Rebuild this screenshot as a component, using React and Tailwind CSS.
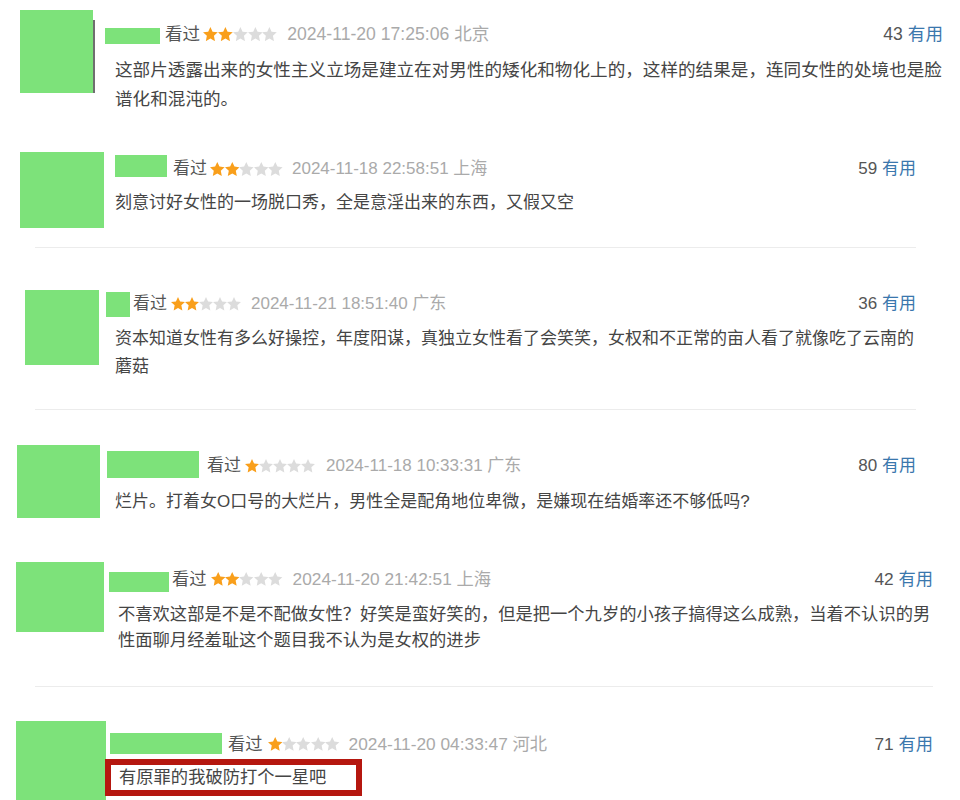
import React from "react";

const G = "bg-[#7de27a]";

function Stars({ n, wrap, size }) {
  return (
    <span className={"flex items-center h-[24px] shrink-0 " + wrap}>
      {[0, 1, 2, 3, 4].map((i) => (
        <svg key={i} viewBox="0.5 0.5 23 22" className={size}>
          <polygon
            points="12,0.5 15.4,7.7 23.5,8.7 17.5,14.2 19.1,22.5 12,18.4 4.9,22.5 6.5,14.2 0.5,8.7 8.6,7.7"
            fill={i < n ? "#f99f1b" : "#dcdcdc"}
          />
        </svg>
      ))}
    </span>
  );
}

function Useful({ num }) {
  return (
    <span className="ml-auto whitespace-nowrap">
      <span className="text-[#555]">{num}</span>{" "}
      <span className="text-[#3a77ad]">有用</span>
    </span>
  );
}

export default function App() {
  return (
    <div className="w-[960px] h-[800px] bg-white overflow-hidden flex flex-col font-['Liberation_Sans','Noto_Sans_CJK_SC',sans-serif] text-[#454545]">
      {/* Block 1 */}
      <div className="h-[140px] shrink-0 flex items-start text-[17.6px]">
        <div className={"ml-[20px] mt-[10px] w-[73px] h-[83px] shrink-0 " + G} />
        <div className="mt-[20px] w-[2px] h-[73px] bg-[#6f6f6f] shrink-0" />
        <div className="ml-[10px] pt-[22px] w-[838px] shrink-0">
          <div className="flex items-start h-[24px] leading-[24px] whitespace-nowrap">
            <div className={"mt-[6px] w-[55px] h-[16px] shrink-0 " + G} />
            <span className="ml-[5px] text-[#555]">看过</span>
            <Stars n={2} wrap="ml-[3px] w-[74px]" size="w-[14.8px] h-[14.2px]" />
            <span className="ml-[10px] text-[#aaa]">2024-11-20 17:25:06 北京</span>
            <Useful num="43" />
          </div>
          <p className="mt-[10px] ml-[10px] leading-[29px] whitespace-nowrap">
            这部片透露出来的女性主义立场是建立在对男性的矮化和物化上的，这样的结果是，连同女性的处境也是脸
            <br />
            谱化和混沌的。
          </p>
        </div>
      </div>

      {/* Block 2 */}
      <div className="h-[130px] shrink-0 flex flex-col text-[17px]">
        <div className="h-[107px] shrink-0 flex items-start">
          <div className={"ml-[20px] mt-[12px] w-[84px] h-[76px] shrink-0 " + G} />
          <div className="ml-[11px] pt-[17px] w-[801px] shrink-0">
            <div className="flex items-start h-[24px] leading-[24px] whitespace-nowrap">
              <div className={"mt-[-2px] w-[52px] h-[22px] shrink-0 " + G} />
              <span className="ml-[6px] text-[#555]">看过</span>
              <Stars n={2} wrap="ml-[3px] w-[73px]" size="w-[14.6px] h-[14px]" />
              <span className="ml-[9px] text-[#aaa]">2024-11-18 22:58:51 上海</span>
              <Useful num="59" />
            </div>
            <p className="mt-[8px] leading-[28px] whitespace-nowrap">
              刻意讨好女性的一场脱口秀，全是意淫出来的东西，又假又空
            </p>
          </div>
        </div>
        <div className="ml-[35px] w-[881px] h-px bg-[#ececec]" />
      </div>

      {/* Block 3 */}
      <div className="h-[160px] shrink-0 flex flex-col text-[17px]">
        <div className="h-[139px] shrink-0 flex items-start">
          <div className={"ml-[25px] mt-[20px] w-[74px] h-[75px] shrink-0 " + G} />
          <div className="ml-[7px] pt-[22px] w-[810px] shrink-0">
            <div className="flex items-start h-[24px] leading-[24px] whitespace-nowrap">
              <div className={"w-[24px] h-[25px] shrink-0 " + G} />
              <span className="ml-[3px] text-[#555]">看过</span>
              <Stars n={2} wrap="ml-[4px] w-[70px]" size="w-[14px] h-[13.4px]" />
              <span className="ml-[10px] text-[#aaa]">2024-11-21 18:51:40 广东</span>
              <Useful num="36" />
            </div>
            <p className="mt-[9px] ml-[9px] leading-[28px] whitespace-nowrap">
              资本知道女性有多么好操控，年度阳谋，真独立女性看了会笑笑，女权和不正常的亩人看了就像吃了云南的
              <br />
              蘑菇
            </p>
          </div>
        </div>
        <div className="ml-[35px] w-[881px] h-px bg-[#ececec]" />
      </div>

      {/* Block 4 */}
      <div className="h-[115px] shrink-0 flex items-start text-[17px]">
        <div className={"ml-[17px] mt-[15px] w-[83px] h-[73px] shrink-0 " + G} />
        <div className="ml-[7px] pt-[24px] w-[809px] shrink-0">
          <div className="flex items-start h-[24px] leading-[24px] whitespace-nowrap">
            <div className={"mt-[-3px] w-[92px] h-[27px] shrink-0 " + G} />
            <span className="ml-[8px] text-[#555]">看过</span>
            <Stars n={1} wrap="ml-[4px] w-[70px]" size="w-[14px] h-[13.4px]" />
            <span className="ml-[11px] text-[#aaa]">2024-11-18 10:33:31 广东</span>
            <Useful num="80" />
          </div>
          <p className="mt-[10px] ml-[8px] leading-[28px] whitespace-nowrap">
            烂片。打着女O口号的大烂片，男性全是配角地位卑微，是嫌现在结婚率还不够低吗?
          </p>
        </div>
      </div>

      {/* Block 5 */}
      <div className="h-[160px] shrink-0 flex flex-col text-[17.3px]">
        <div className="h-[141px] shrink-0 flex items-start">
          <div className={"ml-[16px] mt-[17px] w-[88px] h-[70px] shrink-0 " + G} />
          <div className="ml-[5px] pt-[22px] w-[824px] shrink-0">
            <div className="flex items-start h-[24px] leading-[24px] whitespace-nowrap">
              <div className={"mt-[5px] w-[60px] h-[20px] shrink-0 " + G} />
              <span className="ml-[3px] text-[#555]">看过</span>
              <Stars n={2} wrap="ml-[4px] w-[72px]" size="w-[14.4px] h-[13.8px]" />
              <span className="ml-[10px] text-[#aaa]">2024-11-20 21:42:51 上海</span>
              <Useful num="42" />
            </div>
            <p className="mt-[10px] ml-[9px] leading-[26px] whitespace-nowrap">
              不喜欢这部是不是不配做女性？好笑是蛮好笑的，但是把一个九岁的小孩子搞得这么成熟，当着不认识的男
              <br />
              性面聊月经羞耻这个题目我不认为是女权的进步
            </p>
          </div>
        </div>
        <div className="ml-[35px] w-[898px] h-px bg-[#ececec]" />
      </div>

      {/* Block 6 */}
      <div className="h-[95px] shrink-0 flex items-start text-[17.3px]">
        <div className={"ml-[16px] mt-[16px] w-[90px] h-[79px] shrink-0 " + G} />
        <div className="ml-[4px] pt-[27px] w-[823px] shrink-0">
          <div className="flex items-start h-[24px] leading-[24px] whitespace-nowrap">
            <div className={"mt-[1px] w-[112px] h-[21px] shrink-0 " + G} />
            <span className="ml-[6px] text-[#555]">看过</span>
            <Stars n={1} wrap="ml-[5px] w-[72px]" size="w-[14.4px] h-[13.8px]" />
            <span className="ml-[9px] text-[#aaa]">2024-11-20 04:33:47 河北</span>
            <Useful num="71" />
          </div>
          <div className="ml-[-5px] mt-[3px] w-[257px] h-[37px] border-[6px] border-[#b5170f] bg-white">
            <p className="pl-[8px] leading-[25px] whitespace-nowrap">有原罪的我破防打个一星吧</p>
          </div>
        </div>
      </div>
    </div>
  );
}
